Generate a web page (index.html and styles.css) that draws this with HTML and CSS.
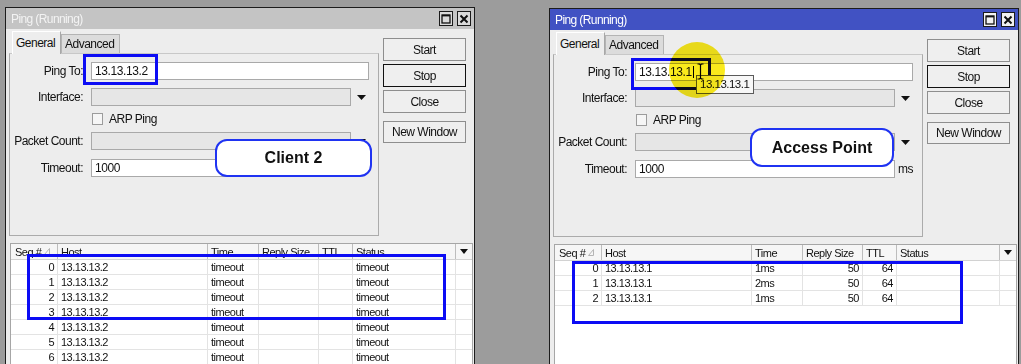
FILE: index.html
```html
<!DOCTYPE html>
<html>
<head>
<meta charset="utf-8">
<link rel="stylesheet" href="styles.css">
</head>
<body>
<section class="win win-left">
  <header class="titlebar">
    <span class="title">Ping (Running)</span>
    <span class="tb-btns">
      <span class="tb-btn"><svg width="10" height="10" viewBox="0 0 10 10"><rect x="1" y="1" width="8" height="8" fill="none" stroke="#111" stroke-width="1.3"/><line x1="1" y1="1.6" x2="9" y2="1.6" stroke="#111" stroke-width="1.6"/></svg></span>
      <span class="tb-btn"><svg width="10" height="10" viewBox="0 0 10 10"><path d="M1.5 1.5 L8.5 8.5 M8.5 1.5 L1.5 8.5" stroke="#111" stroke-width="2"/></svg></span>
    </span>
  </header>
  <div class="win-body">
    <div class="top">
      <div class="tabarea">
        <div class="tabs"><span class="tab tab-on">General</span><span class="tab">Advanced</span></div>
        <div class="panel">
          <div class="row r1"><span class="lbl">Ping To:</span><span class="inp inp-wide">13.13.13.2</span></div>
          <div class="row r2"><span class="lbl">Interface:</span><span class="inp inp-dis"></span><span class="dd"><svg width="9" height="5" viewBox="0 0 9 5"><path d="M0 0 H9 L4.5 5 Z" fill="#111"/></svg></span></div>
          <div class="row r3"><span class="lbl"></span><span class="chk"></span><span class="chk-lbl">ARP Ping</span></div>
          <div class="row r4"><span class="lbl">Packet Count:</span><span class="inp inp-dis"></span><span class="dd"><svg width="9" height="5" viewBox="0 0 9 5"><path d="M0 0 H9 L4.5 5 Z" fill="#111"/></svg></span></div>
          <div class="row r5"><span class="lbl">Timeout:</span><span class="inp inp-mid">1000</span><span class="unit">ms</span></div>
        </div>
      </div>
      <div class="btns">
        <button class="btn">Start</button>
        <button class="btn btn-focus">Stop</button>
        <button class="btn">Close</button>
        <button class="btn btn-nw">New Window</button>
      </div>
    </div>
    <div class="grid">
      <div class="g-head">
        <span class="c">Seq # <svg class="sort" width="6" height="7" viewBox="0 0 6 7"><path d="M0.5 6.5 L5.5 0.5 L5.5 6.5 Z" fill="none" stroke="#b5b5b5" stroke-width="1"/></svg></span><span class="c">Host</span><span class="c">Time</span><span class="c">Reply Size</span><span class="c">TTL</span><span class="c">Status</span><span class="c c-dd"><svg width="8" height="5" viewBox="0 0 8 5"><path d="M0 0 H8 L4 5 Z" fill="#111"/></svg></span>
      </div>
      <div class="g-row"><span class="c num">0</span><span class="c">13.13.13.2</span><span class="c">timeout</span><span class="c"></span><span class="c"></span><span class="c">timeout</span><span class="c c-dd"></span></div>
      <div class="g-row"><span class="c num">1</span><span class="c">13.13.13.2</span><span class="c">timeout</span><span class="c"></span><span class="c"></span><span class="c">timeout</span><span class="c c-dd"></span></div>
      <div class="g-row"><span class="c num">2</span><span class="c">13.13.13.2</span><span class="c">timeout</span><span class="c"></span><span class="c"></span><span class="c">timeout</span><span class="c c-dd"></span></div>
      <div class="g-row"><span class="c num">3</span><span class="c">13.13.13.2</span><span class="c">timeout</span><span class="c"></span><span class="c"></span><span class="c">timeout</span><span class="c c-dd"></span></div>
      <div class="g-row"><span class="c num">4</span><span class="c">13.13.13.2</span><span class="c">timeout</span><span class="c"></span><span class="c"></span><span class="c">timeout</span><span class="c c-dd"></span></div>
      <div class="g-row"><span class="c num">5</span><span class="c">13.13.13.2</span><span class="c">timeout</span><span class="c"></span><span class="c"></span><span class="c">timeout</span><span class="c c-dd"></span></div>
      <div class="g-row"><span class="c num">6</span><span class="c">13.13.13.2</span><span class="c">timeout</span><span class="c"></span><span class="c"></span><span class="c">timeout</span><span class="c c-dd"></span></div>
    </div>
  </div>
</section>

<section class="win win-right">
  <header class="titlebar">
    <span class="title">Ping (Running)</span>
    <span class="tb-btns">
      <span class="tb-btn"><svg width="10" height="10" viewBox="0 0 10 10"><rect x="1" y="1" width="8" height="8" fill="none" stroke="#111" stroke-width="1.3"/><line x1="1" y1="1.6" x2="9" y2="1.6" stroke="#111" stroke-width="1.6"/></svg></span>
      <span class="tb-btn"><svg width="10" height="10" viewBox="0 0 10 10"><path d="M1.5 1.5 L8.5 8.5 M8.5 1.5 L1.5 8.5" stroke="#111" stroke-width="2"/></svg></span>
    </span>
  </header>
  <div class="win-body">
    <div class="top">
      <div class="tabarea">
        <div class="tabs"><span class="tab tab-on">General</span><span class="tab">Advanced</span></div>
        <div class="panel">
          <div class="row r1"><span class="lbl">Ping To:</span><span class="inp inp-wide">13.13.13.1<span class="caret"></span></span></div>
          <div class="row r2"><span class="lbl">Interface:</span><span class="inp inp-dis"></span><span class="dd"><svg width="9" height="5" viewBox="0 0 9 5"><path d="M0 0 H9 L4.5 5 Z" fill="#111"/></svg></span></div>
          <div class="row r3"><span class="lbl"></span><span class="chk"></span><span class="chk-lbl">ARP Ping</span></div>
          <div class="row r4"><span class="lbl">Packet Count:</span><span class="inp inp-dis"></span><span class="dd"><svg width="9" height="5" viewBox="0 0 9 5"><path d="M0 0 H9 L4.5 5 Z" fill="#111"/></svg></span></div>
          <div class="row r5"><span class="lbl">Timeout:</span><span class="inp inp-mid">1000</span><span class="unit">ms</span></div>
        </div>
      </div>
      <div class="btns">
        <button class="btn">Start</button>
        <button class="btn btn-focus">Stop</button>
        <button class="btn">Close</button>
        <button class="btn btn-nw">New Window</button>
      </div>
    </div>
    <div class="grid">
      <div class="g-head">
        <span class="c">Seq # <svg class="sort" width="6" height="7" viewBox="0 0 6 7"><path d="M0.5 6.5 L5.5 0.5 L5.5 6.5 Z" fill="none" stroke="#b5b5b5" stroke-width="1"/></svg></span><span class="c">Host</span><span class="c">Time</span><span class="c">Reply Size</span><span class="c">TTL</span><span class="c">Status</span><span class="c c-dd"><svg width="8" height="5" viewBox="0 0 8 5"><path d="M0 0 H8 L4 5 Z" fill="#111"/></svg></span>
      </div>
      <div class="g-row"><span class="c num">0</span><span class="c">13.13.13.1</span><span class="c">1ms</span><span class="c num">50</span><span class="c num">64</span><span class="c"></span><span class="c c-dd"></span></div>
      <div class="g-row"><span class="c num">1</span><span class="c">13.13.13.1</span><span class="c">2ms</span><span class="c num">50</span><span class="c num">64</span><span class="c"></span><span class="c c-dd"></span></div>
      <div class="g-row"><span class="c num">2</span><span class="c">13.13.13.1</span><span class="c">1ms</span><span class="c num">50</span><span class="c num">64</span><span class="c"></span><span class="c c-dd"></span></div>
    </div>
  </div>
</section>

<div class="bubble bubble-client">Client 2</div>
<div class="bubble bubble-ap">Access Point</div>
<div class="mark mark-lping"></div>
<div class="mark mark-ltable"></div>
<div class="mark mark-rping"></div>
<div class="mark mark-rtable"></div>
<div class="tip">13.13.13.1</div>
<svg class="ibeam" width="7" height="17" viewBox="0 0 7 17"><path d="M0.5 1 H2.5 L3.5 2 L4.5 1 H6.5 M3.5 2 V15 M0.5 16 H2.5 L3.5 15 L4.5 16 H6.5" fill="none" stroke="#000" stroke-width="1.2"/></svg>
<div class="spot"></div>
</body>
</html>
```

FILE: styles.css
```css
* { box-sizing: border-box; margin: 0; padding: 0; }
html, body { width: 1021px; height: 364px; overflow: hidden; }
body {
  position: relative;
  background: #9c9c9c;
  font-family: "Liberation Sans", Arial, sans-serif;
  font-size: 12px;
  letter-spacing: -0.5px;
  color: #111;
}

/* windows on the desktop */
.win {
  position: absolute;
  top: 7px;
  left: 5px;
  width: 470px;
  height: 357px;
  border: 1px solid #1c1c1c;
  border-bottom: none;
  background: #ededed;
  display: flex;
  flex-direction: column;
}
.win-right { left: 549px; top: 8px; height: 356px; }

.titlebar {
  height: 21px;
  flex: none;
  background: #c4c4c4;
  color: #f3f3f3;
  display: flex;
  align-items: center;
  justify-content: space-between;
  padding: 0 3px 0 5px;
  letter-spacing: -0.6px;
}
.win-right .titlebar { background: #4152c3; color: #fff; }
.tb-btns { display: flex; gap: 4px; }
.tb-btn {
  width: 14px;
  height: 15px;
  border: 1px solid #1a1a1a;
  background: #dadada;
  display: flex;
  align-items: center;
  justify-content: center;
}
.win-right .tb-btn { background: #f2f2f2; }

.win-body {
  flex: 1;
  min-height: 0;
  display: flex;
  flex-direction: column;
  padding: 2px 0 0 3px;
}
.top { display: flex; gap: 4px; flex: none; }
.tabarea { width: 370px; display: flex; flex-direction: column; }

.tabs { display: flex; align-items: flex-end; height: 22px; padding-left: 3px; }
.tab {
  height: 19px;
  width: 59px;
  background: #dcdcdc;
  border: 1px solid #b4b4b4;
  border-bottom: none;
  display: flex;
  align-items: center;
  padding-left: 3px;
}
.tab-on {
  height: 23px;
  width: 49px;
  margin-bottom: -1px;
  background: #ededed;
  border-color: #ffffff #a8a8a8 transparent #ffffff;
  position: relative;
  z-index: 1;
  padding-bottom: 1px;
}

.panel {
  height: 183px;
  border: 1px solid #ababab;
  border-top-color: #c8c8c8;
  padding-top: 8px;
  display: flex;
  flex-direction: column;
}
.row { display: flex; align-items: center; height: 18px; flex: none; }
.r1 { margin-bottom: 8px; }
.r2 { margin-bottom: 7px; }
.r3 { height: 12px; margin-bottom: 7px; }
.r4 { margin-bottom: 9px; }
.lbl { width: 73px; margin-right: 8px; text-align: right; flex: none; }
.inp {
  height: 18px;
  border: 1px solid #a9a9a9;
  background: #fff;
  padding-left: 3px;
  line-height: 16px;
  letter-spacing: -0.4px;
  display: flex;
  align-items: center;
}
.inp-wide { width: 278px; }
.inp-mid { width: 260px; }
.inp-dis { width: 260px; background: #e6e6e6; }
.dd { width: 18px; display: flex; justify-content: center; padding-left: 2px; }
.unit { margin-left: 3px; }
.chk {
  width: 11px;
  height: 12px;
  border: 1px solid #9c9c9c;
  background: #f6f6f6;
  margin-left: 1px;
}
.chk-lbl { margin-left: 6px; }
.caret { display: inline-block; width: 1px; height: 12px; background: #000; margin-left: 1px; }

.btns { display: flex; flex-direction: column; gap: 3px; margin-top: 7px; }
.btn {
  width: 83px;
  height: 23px;
  border: 1px solid #8e8e8e;
  background: #efefef;
  font: inherit;
  letter-spacing: -0.5px;
  color: #111;
}
.btn-focus { border-color: #111; }
.btn-nw { margin-top: 5px; height: 22px; }

/* result grid */
.grid {
  margin: 7px 0 0 1px;
  width: 463px;
  flex: 1;
  background: #fff;
  border: 1px solid #a6a6a6;
  border-bottom: none;
  font-size: 11px;
  letter-spacing: -0.5px;
  overflow: hidden;
}
.g-head, .g-row {
  display: grid;
  grid-template-columns: 47px 150px 51px 60px 34px 103px 16px;
}
.g-head { height: 16px; background: #f6f6f6; border-bottom: 1px solid #d2d2d2; }
.g-row { height: 15px; }
.c {
  border-right: 1px solid #e3e3e3;
  padding: 0 3px;
  display: flex;
  align-items: center;
  white-space: nowrap;
  overflow: hidden;
}
.g-head .c { border-right-color: #bdbdbd; }
.g-head .c:first-child { padding-left: 4px; }
.g-row .c { border-bottom: 1px solid #e3e3e3; }
.c.num { justify-content: flex-end; }
.c-dd { border-right: none; justify-content: center; padding: 0; }
.sort { margin-left: 3px; }

/* annotations over the capture */
.bubble {
  position: absolute;
  background: #fff;
  border: 2px solid #1f33f2;
  border-radius: 12px;
  font-size: 16px;
  font-weight: bold;
  letter-spacing: 0;
  color: #111;
  display: flex;
  align-items: center;
  justify-content: center;
}
.bubble-client { left: 215px; top: 139px; width: 157px; height: 38px; }
.bubble-ap { left: 750px; top: 128px; width: 144px; height: 39px; }

.mark { position: absolute; border: 3px solid #0c0cf4; }
.mark-lping { left: 83px; top: 54px; width: 75px; height: 31px; }
.mark-ltable { left: 27px; top: 254px; width: 419px; height: 66px; }
.mark-rping { left: 631px; top: 58px; width: 80px; height: 32px; }
.mark-rtable { left: 572px; top: 261px; width: 391px; height: 63px; }

.tip {
  position: absolute;
  left: 696px;
  top: 75px;
  width: 58px;
  height: 19px;
  border: 1px solid #5a5a5a;
  background: #f7f7f7;
  padding-left: 3px;
  line-height: 17px;
  font-size: 11.5px;
  letter-spacing: -0.5px;
}
.ibeam { position: absolute; left: 697px; top: 63px; }
.spot {
  position: absolute;
  left: 669px;
  top: 42px;
  width: 56px;
  height: 56px;
  border-radius: 50%;
  background: rgb(250, 234, 28);
  mix-blend-mode: multiply;
}
```
